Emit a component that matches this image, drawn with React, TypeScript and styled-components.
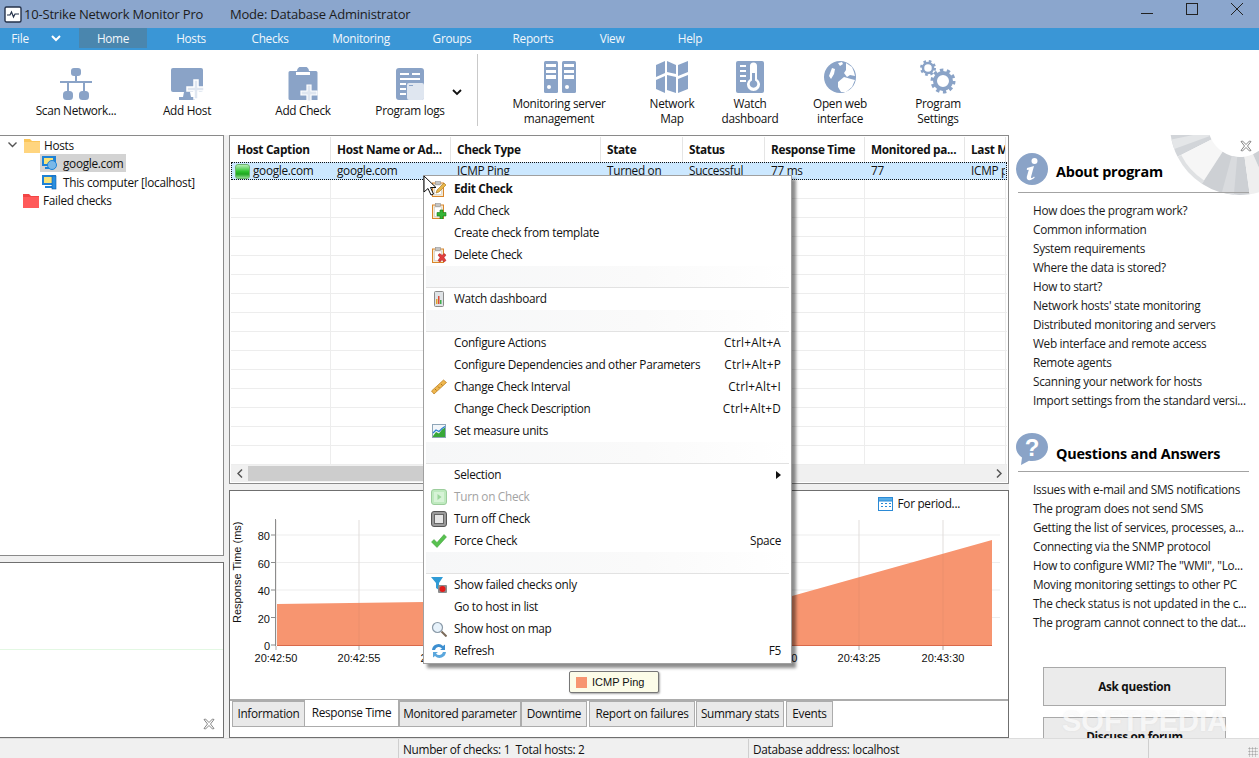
import React from 'react';
import styled, { createGlobalStyle } from 'styled-components';

const GlobalStyle = createGlobalStyle`
  html, body {
    margin: 0;
    padding: 0;
    background: #f0f0f0;
  }
  * {
    box-sizing: border-box;
  }
  body {
    font-family: "Open Sans", "Noto Sans", sans-serif;
    font-size: 11.8px;
    letter-spacing: -0.3px;
    color: #111;
  }
`;

const Win = styled.div`
  position: relative;
  width: 1259px;
  height: 758px;
  overflow: hidden;
  display: flex;
  flex-direction: column;
  background: #f0f0f0;
`;

/* title + ribbon */
const TitleBar = styled.div`
  height: 28px;
  flex: none;
  display: flex;
  align-items: center;
  background: #8ba6cd;
  padding-left: 4px;
  font-size: 13px;
  letter-spacing: -0.2px;
  color: #1c1c1c;
`;

const TitleText = styled.span<{ $w: number }>`
  width: ${(p) => p.$w}px;
  white-space: nowrap;
`;

const WinBtns = styled.div`
  margin-left: auto;
  display: flex;
  align-items: center;
  height: 100%;
`;

const WinBtn = styled.div`
  width: 45px;
  height: 100%;
  display: flex;
  justify-content: center;
`;

const MenuBar = styled.div`
  height: 22px;
  flex: none;
  display: flex;
  background: #3a96d6;
  color: #f2f7fb;
`;

const MenuTab = styled.div<{ $w: number; $active?: boolean }>`
  width: ${(p) => p.$w}px;
  height: 20px;
  display: flex;
  align-items: center;
  justify-content: center;
  background: ${(p) => (p.$active ? '#4a86ae' : 'transparent')};
`;

const Toolbar = styled.div`
  height: 80px;
  flex: none;
  display: flex;
  background: #fff;
  padding-left: 20px;
  position: relative;
`;

const Gripper = styled.div`
  position: absolute;
  left: 3px;
  top: 4px;
  width: 5px;
  height: 74px;
  background-image: radial-gradient(#aaa 45%, transparent 50%);
  background-size: 2px 2px;
`;

const Tool = styled.div<{ $w: number; $ml?: number; $low?: boolean }>`
  width: ${(p) => p.$w}px;
  margin-left: ${(p) => p.$ml ?? 0}px;
  padding-top: ${(p) => (p.$low ? 17 : 10)}px;
  display: flex;
  flex-direction: column;
  align-items: center;
  text-align: center;
  line-height: 15px;
  color: #111;
  white-space: nowrap;
`;

const ToolLabel = styled.div`
  margin-top: 2px;
`;

const ToolChevron = styled.div`
  width: 16px;
  margin-left: 3px;
  padding-top: 39px;
  display: flex;
  justify-content: center;
`;

const ToolDivider = styled.div`
  width: 1px;
  height: 72px;
  margin: 4px 0 0 12px;
  background: #c9c9c9;
`;

/* main area */
const Main = styled.div`
  flex: 1;
  min-height: 0;
  display: flex;
  background: #fff;
  padding-top: 5px;
`;

const LeftCol = styled.div`
  width: 224px;
  flex: none;
  display: flex;
  flex-direction: column;
  background: #f0f0f0;
`;

const TreePanel = styled.div`
  height: 421px;
  flex: none;
  background: #fff;
  border: 1px solid #8a8a8a;
  border-left: 0;
`;

const HSplit = styled.div`
  height: 6px;
  flex: none;
  display: flex;
  justify-content: center;
  align-items: center;
`;

const HDots = styled.div`
  width: 74px;
  height: 3px;
  background-image: radial-gradient(#999 45%, transparent 50%);
  background-size: 2px 2px;
`;

const NotePanel = styled.div`
  flex: 1;
  position: relative;
  background: #fff;
  border: 1px solid #6f6f6f;
  border-left: 0;
`;

const NoteLine = styled.div`
  margin-top: 86px;
  height: 1px;
  background: #e3f8e3;
`;

const CloseMark = styled.div<{ $r: number; $b?: number; $t?: number }>`
  position: absolute;
  right: ${(p) => p.$r}px;
  ${(p) => (p.$t !== undefined ? `top: ${p.$t}px;` : `bottom: ${p.$b}px;`)}
  width: 12px;
  height: 12px;
  display: flex;
`;

const TreeRow = styled.div<{ $indent: number }>`
  height: 18.34px;
  display: flex;
  align-items: center;
  padding-left: ${(p) => p.$indent}px;
  white-space: nowrap;
`;

const Twist = styled.div`
  width: 16px;
  margin-left: 4px;
  margin-right: 3px;
  display: flex;
  justify-content: center;
`;

const Node = styled.div<{ $selected?: boolean; $gap: number }>`
  height: 18px;
  display: flex;
  align-items: center;
  gap: ${(p) => p.$gap}px;
  padding: 0 3px 0 1px;
  background: ${(p) => (p.$selected ? '#d3d3d3' : 'transparent')};
`;

const VSplit = styled.div`
  width: 5px;
  flex: none;
  display: flex;
  align-items: center;
  background: #f0f0f0;
  padding-bottom: 6px;
`;

const VDots = styled.div`
  width: 3px;
  height: 82px;
  margin-left: 1px;
  background-image: radial-gradient(#999 45%, transparent 50%);
  background-size: 2px 2px;
`;

const MidCol = styled.div`
  width: 780px;
  flex: none;
  display: flex;
  flex-direction: column;
  gap: 6px;
  background: #f0f0f0;
`;

const GridPanel = styled.div`
  height: 349px;
  flex: none;
  display: flex;
  flex-direction: column;
  background: #fff;
  border: 1px solid #8a8a8a;
  padding: 1px;
  overflow: hidden;
`;

const GridHead = styled.div`
  height: 25px;
  flex: none;
  display: flex;
  font-weight: 700;
`;

const HeadCell = styled.div<{ $w: number }>`
  width: ${(p) => p.$w}px;
  flex: none;
  display: flex;
  align-items: center;
  padding: 0 0 2px 6px;
  border-right: 1px solid #e5e5e5;
  white-space: nowrap;
  overflow: hidden;
`;

const GridBody = styled.div`
  flex: 1;
  min-height: 0;
  overflow: hidden;
`;

const GridRow = styled.div<{ $selected?: boolean }>`
  height: ${(p) => (p.$selected ? 18 : 19)}px;
  display: flex;
  background: ${(p) => (p.$selected ? '#cce8ff' : '#fff')};
  ${(p) =>
    p.$selected
      ? 'outline: 1px dotted #111; outline-offset: -1px;'
      : 'border-bottom: 1px solid #ededed;'}
`;

const Cell = styled.div<{ $w: number; $blank?: boolean }>`
  width: ${(p) => p.$w}px;
  flex: none;
  display: flex;
  align-items: center;
  gap: 3px;
  padding: 0 0 ${(p) => (p.$blank ? 0 : 2)}px ${(p) => (p.$blank ? 0 : 6)}px;
  border-right: 1px solid ${(p) => (p.$blank ? '#ededed' : 'transparent')};
  white-space: nowrap;
  overflow: hidden;
`;

const FirstCell = styled(Cell)`
  padding-left: 4px;
`;

const LedBox = styled.span`
  width: 15px;
  height: 15px;
  flex: none;
  margin-bottom: -2px;
  border-radius: 3px;
  border: 1px solid #6fb56f;
  background: linear-gradient(#b5edb5, #2fc22f 50%, #1fa51f 70%, #8fdc8f);
`;

const ScrollBar = styled.div`
  height: 17px;
  flex: none;
  display: flex;
  align-items: center;
  background: #f0f0f0;
`;

const ScrollEnd = styled.div`
  width: 17px;
  height: 17px;
  flex: none;
  display: flex;
  align-items: center;
  justify-content: center;
`;

const ScrollThumb = styled.div`
  height: 15px;
  flex: 1;
  margin-right: 220px;
  background: #cdcdcd;
`;

const ChartPanel = styled.div`
  flex: 1;
  min-height: 0;
  display: flex;
  flex-direction: column;
  position: relative;
  background: #fff;
  border: 1px solid #6f6f6f;
`;

const PeriodBar = styled.div`
  height: 24px;
  flex: none;
  display: flex;
  align-items: center;
  justify-content: flex-end;
  gap: 5px;
  padding-right: 48px;
`;

const ChartSvg = styled.svg`
  display: block;
  flex: none;
  text {
    font-family: "Liberation Sans", Arial, sans-serif;
    font-size: 11px;
    letter-spacing: 0;
    fill: #111;
  }
`;

const Legend = styled.div`
  position: absolute;
  left: 339px;
  top: 180px;
  width: 90px;
  height: 22px;
  display: flex;
  align-items: center;
  gap: 5px;
  padding-left: 6px;
  background: #fcfce8;
  border: 1px solid #777;
  border-radius: 2px;
  box-shadow: 1px 1px 2px rgba(0, 0, 0, 0.35);
  font-family: "Liberation Sans", Arial, sans-serif;
  font-size: 11px;
  letter-spacing: 0;
`;

const LegendSwatch = styled.span`
  width: 11px;
  height: 11px;
  background: #f79570;
`;

const Tabs = styled.div`
  height: 38px;
  flex: none;
  display: flex;
  align-items: flex-start;
  padding-left: 2px;
  border-top: 2px solid #acacac;
`;

const Tab = styled.div<{ $w: number; $active?: boolean; $ml?: number }>`
  width: ${(p) => p.$w}px;
  margin-left: ${(p) => p.$ml ?? 0}px;
  height: ${(p) => (p.$active ? 27 : 26)}px;
  margin-top: ${(p) => (p.$active ? -1 : 0)}px;
  padding-bottom: 3px;
  display: flex;
  align-items: center;
  justify-content: center;
  white-space: nowrap;
  background: ${(p) => (p.$active ? '#fff' : '#e9e9e9')};
  border: 1px solid #acacac;
  border-top: ${(p) => (p.$active ? '0' : '1px solid #acacac')};
  border-left: ${(p) => (p.$active ? '0' : '1px solid #acacac')};
  border-right: 1px solid #acacac;
`;

/* right help column */
const HelpCol = styled.div`
  flex: 1;
  position: relative;
  overflow: hidden;
  background: #fff;
  padding: 20px 10px 0 9px;
`;

const Buoy = styled.svg`
  position: absolute;
  right: 0;
  top: 0;
`;

const HelpHead = styled.div`
  position: relative;
  height: 38px;
  display: flex;
  align-items: center;
  gap: 8px;
  border-bottom: 1px solid #a3a3a3;
  padding-bottom: 5px;
`;

const HelpIconBox = styled.div<{ $drop: number }>`
  margin-left: -2px;
  width: 32px;
  height: 32px;
  margin-top: ${(p) => p.$drop}px;
  flex: none;
`;

const HelpTitle = styled.div<{ $drop: number }>`
  font-size: 14.4px;
  font-weight: 700;
  letter-spacing: -0.2px;
  color: #000;
  padding-top: ${(p) => p.$drop}px;
`;

const HelpList = styled.div<{ $mb: number }>`
  padding: 8px 0 0 15px;
  margin-bottom: ${(p) => p.$mb}px;
  line-height: 19px;
`;

const HelpLink = styled.div`
  white-space: nowrap;
  height: 19px;
  color: #1a1a1a;
`;

const HelpButton = styled.div`
  width: 183px;
  height: 39px;
  margin: 0 0 11px 25px;
  padding-bottom: 2px;
  flex: none;
  display: flex;
  align-items: center;
  justify-content: center;
  font-weight: 700;
  background: #ebebeb;
  border: 1px solid #a9a9a9;
`;

const Watermark = styled.div`
  position: absolute;
  left: 53px;
  bottom: 0;
  font-family: "Liberation Sans", Arial, sans-serif;
  font-weight: 700;
  font-size: 29px;
  letter-spacing: 0;
  color: rgba(255, 255, 255, 0.72);
  text-shadow: 0 0 2px rgba(190, 190, 190, 0.25);
`;

/* status */
const StatusBar = styled.div`
  height: 20px;
  flex: none;
  display: flex;
  align-items: center;
  background: #f0f0f0;
  border-top: 1px solid #dcdcdc;
`;

const StatusCell = styled.div<{ $w: number }>`
  width: ${(p) => p.$w}px;
  height: 100%;
  display: flex;
  align-items: center;
  padding-left: 4px;
  border-right: 1px solid #cfcfcf;
  white-space: nowrap;
  flex: none;
`;

const Grip = styled.div`
  position: absolute;
  right: 1px;
  bottom: 1px;
  width: 10px;
  height: 10px;
  background-image: radial-gradient(#aaa 45%, transparent 50%);
  background-size: 3px 3px;
`;

/* context menu */
const Menu = styled.div`
  position: absolute;
  left: 423px;
  top: 175px;
  width: 369px;
  height: 489px;
  padding: 2px 0 0 1px;
  background: #fff;
  border: 1px solid #a0a0a0;
  box-shadow: 4px 4px 3px rgba(0, 0, 0, 0.45);
`;

const MenuRow = styled.div<{ $disabled?: boolean; $bold?: boolean }>`
  height: 22px;
  display: flex;
  align-items: center;
  padding: 0 10px 2px 6px;
  white-space: nowrap;
  color: ${(p) => (p.$disabled ? '#a3a3a3' : '#111')};
  font-weight: ${(p) => (p.$bold ? 700 : 400)};
`;

const MenuIcon = styled.span`
  width: 16px;
  height: 16px;
  flex: none;
  margin-right: 7px;
  margin-bottom: -2px;
  display: flex;
`;

const MenuShort = styled.span<{ $spaced?: boolean }>`
  margin-left: auto;
  letter-spacing: ${(p) => (p.$spaced ? '0.2px' : '-0.3px')};
`;

const MenuSep = styled.div`
  height: 22px;
  margin: 0 2px 0 1px;
  background: linear-gradient(90deg, #f6f7f8, #fafafa 60%, #ffffff);
  border-bottom: 1px solid #e2e2e2;
`;

const Cursor = styled.svg`
  position: absolute;
  left: 423px;
  top: 175px;
`;

const iconBlue = '#8aa3c7';

const ScanIcon = () => (
  <svg width="34" height="34" viewBox="0 0 34 34">
    <rect x="12" y="1" width="10" height="8" rx="3" fill={iconBlue} />
    <rect x="16" y="8" width="2" height="8" fill={iconBlue} />
    <rect x="1" y="14" width="32" height="2" fill={iconBlue} />
    <rect x="8" y="15" width="2" height="9" fill={iconBlue} />
    <rect x="24" y="15" width="2" height="9" fill={iconBlue} />
    <rect x="4" y="24" width="10" height="9" rx="3.5" fill={iconBlue} />
    <rect x="20" y="24" width="10" height="9" rx="3.5" fill={iconBlue} />
  </svg>
);

const AddHostIcon = () => (
  <svg width="34" height="34" viewBox="0 0 34 34">
    <rect x="1" y="1" width="32" height="24" rx="2" fill={iconBlue} />
    <path d="M14 25h6l1 5h4v3H9v-3h4z" fill={iconBlue} />
    <path d="M24 13h4v7h6v4h-6v8h-4v-8h-7v-4h7z" fill="#dfe6f0" stroke="#fff" strokeWidth="1.5" />
  </svg>
);

const AddCheckIcon = () => (
  <svg width="32" height="34" viewBox="0 0 32 34">
    <path d="M3 4h7a6 5 0 0 1 12 0h7a1.500 1.500 0 0 1 1.500 1.500V33H3a1.500 1.500 0 0 1-1.500-1.500v-26A1.500 1.500 0 0 1 3 4z" fill={iconBlue} />
    <rect x="9" y="5" width="14" height="3" fill="#fff" />
    <path d="M20 18h4v6h6v4h-6v6h-4v-6h-6v-4h6z" fill="#dfe6f0" stroke="#fff" strokeWidth="1.2" />
  </svg>
);

const LogsIcon = () => (
  <svg width="30" height="34" viewBox="0 0 30 34">
    <rect x="1" y="1" width="28" height="32" rx="3" fill={iconBlue} />
    <rect x="5" y="6" width="9" height="2" fill="#fff" />
    <rect x="17" y="6" width="8" height="2" fill="#fff" />
    <rect x="5" y="11" width="20" height="2" fill="#fff" />
    <rect x="5" y="16" width="6" height="2" fill="#fff" />
    <rect x="5" y="21" width="6" height="2" fill="#fff" />
    <rect x="5" y="26" width="6" height="2" fill="#fff" />
    <rect x="12" y="16" width="17" height="17" rx="2" fill="#dfe6f0" />
    <rect x="14" y="18" width="4" height="1" fill={iconBlue} />
  </svg>
);

const ServerIcon = () => (
  <svg width="34" height="34" viewBox="0 0 34 34">
    {[2, 20].map((x) => (
      <g key={x}>
        <rect x={x} y="1" width="14" height="32" rx="1.500" fill={iconBlue} />
        <rect x={x + 2} y="4" width="10" height="3" fill="#fff" />
        <rect x={x + 2} y="10" width="10" height="3" fill="#fff" />
        <rect x={x + 2} y="15" width="10" height="4" fill="#fff" />
        <circle cx={x + 5} cy="27" r="2" fill="#fff" />
      </g>
    ))}
  </svg>
);

const MapIcon = () => (
  <svg width="34" height="34" viewBox="0 0 34 34">
    <path d="M1 5l9-4v12l-9 4zM1 20l9-4v17l-9-4zM12 1l9 4v9l-9-2zM12 15l9 2v16l-9-3zM23 5l10-4v11l-10 4zM23 19l10-4v14l-10 4z" fill={iconBlue} />
  </svg>
);

const WatchIcon = () => (
  <svg width="30" height="34" viewBox="0 0 30 34">
    <rect x="1" y="1" width="28" height="32" rx="2" fill={iconBlue} />
    <rect x="5" y="5" width="6" height="2" fill="#fff" />
    <rect x="5" y="10" width="6" height="2" fill="#fff" />
    <rect x="5" y="15" width="6" height="2" fill="#fff" />
    <rect x="5" y="20" width="6" height="2" fill="#fff" />
    <path d="M15 6a3.500 3.500 0 0 1 7 0v13a6.500 6.500 0 1 1-7 0z" fill="#fff" />
    <path d="M17 13h3v7.500a3.800 3.800 0 1 1-3 0z" fill={iconBlue} />
  </svg>
);

const GlobeIcon = () => (
  <svg width="34" height="34" viewBox="0 0 34 34">
    <circle cx="17" cy="17" r="16" fill={iconBlue} />
    <path d="M15 3l4-1 1 2-3 2zM23 3l6 4 2 5 1 4-5-1-3 2-3-4 2-3zM9 8l3 1-1 5-3 5-2-3zM15 22l6-5 7 2 4 1-3 7-6 5-5 0-3-5z" fill="#fff" />
  </svg>
);

const GearsIcon = () => (
  <svg width="36" height="34" viewBox="0 0 36 34">
    <circle cx="8" cy="8" r="5" fill="none" stroke={iconBlue} strokeWidth="2.500" />
    <circle cx="8" cy="8" r="6.500" fill="none" stroke={iconBlue} strokeWidth="3" strokeDasharray="2.500 2.600" />
    <circle cx="23" cy="21" r="8" fill="none" stroke={iconBlue} strokeWidth="4" />
    <circle cx="23" cy="21" r="10.500" fill="none" stroke={iconBlue} strokeWidth="4" strokeDasharray="3.300 3.300" />
  </svg>
);

const FolderIcon = ({ c, tab }: { c: string; tab: string }) => (
  <svg width="16" height="15" viewBox="0 0 16 15">
    <path d="M0 1h6l2 2h8v12H0z" fill={tab} />
    <rect x="0" y="4" width="16" height="11" fill={c} />
  </svg>
);

const HostIcon = ({ globe }: { globe?: boolean }) => (
  <svg width="16" height="16" viewBox="0 0 16 16">
    <rect x="1" y="1" width="14" height="10" fill="#1e82d6" />
    <rect x="3" y="3" width="9" height="6" fill="#f7e27a" />
    <rect x="4" y="12" width="8" height="2" fill="#1e82d6" />
    {globe ? <circle cx="11" cy="10" r="4.500" fill="#7ab8e8" stroke="#1e82d6" /> : <rect x="11" y="2" width="4" height="13" fill="#2a8fe0" stroke="#0f5fa8" strokeWidth="0.600" />}
  </svg>
);

const XIcon = () => (
  <svg width="12" height="12" viewBox="0 0 12 12">
    <path d="M1 1.500L2.500 1 6 4.500 9.500 1 11 1.500 7.500 6 11 10.500 9.500 11 6 7.500 2.500 11 1 10.500 4.500 6z" fill="#fff" stroke="#777" strokeWidth="0.900" />
  </svg>
);

const Clipboard = ({ children }: { children?: React.ReactNode }) => (
  <svg width="16" height="16" viewBox="0 0 16 16">
    <rect x="1.500" y="2" width="11" height="13.500" fill="#f4e9d2" stroke="#d9862a" />
    <rect x="3.500" y="4" width="7" height="9.500" fill="#fff" stroke="#bbb" strokeWidth="0.500" />
    <rect x="4.500" y="0.500" width="5" height="3" fill="#c4c4c4" stroke="#888" strokeWidth="0.500" />
    {children}
  </svg>
);

const iconEdit = (
  <Clipboard>
    <path d="M5 12l1-3 7-7 2 2-7 7z" fill="#e8b64a" stroke="#a8751a" strokeWidth="0.600" />
  </Clipboard>
);
const iconAdd = (
  <Clipboard>
    <path d="M9 7h3v2.500h3V13h-3v3H9v-3H6V9.500h3z" fill="#36b436" stroke="#167a16" strokeWidth="0.600" />
  </Clipboard>
);
const iconDelete = (
  <Clipboard>
    <path d="M7 8l2-1.500 2 2 2-2L15 8l-2 2.500 2 3-2 1.500-2-2.500L9 15l-2-1.500 2-3z" fill="#e23d3d" stroke="#a51a1a" strokeWidth="0.500" />
  </Clipboard>
);
const iconDash = (
  <svg width="16" height="16" viewBox="0 0 16 16">
    <rect x="3.500" y="0.500" width="9" height="15" rx="1" fill="#dfe3e6" stroke="#8b8b8b" />
    <rect x="5" y="8" width="1.500" height="5" fill="#e2a52c" />
    <rect x="7" y="5" width="1.500" height="8" fill="#d94c3a" />
    <rect x="9" y="9" width="1.500" height="4" fill="#3fae4b" />
  </svg>
);
const iconRuler = (
  <svg width="16" height="16" viewBox="0 0 16 16">
    <path d="M0.500 12L12.500 1l3 2.500L3 15z" fill="#eeb64e" stroke="#b97a18" strokeWidth="0.700" />
    <path d="M4 10l1.500 1.500M7 7.500l1.500 1.500M10 5l1.500 1.500" stroke="#8a5a10" strokeWidth="0.700" />
  </svg>
);
const iconUnits = (
  <svg width="16" height="16" viewBox="0 0 16 16">
    <rect x="1.500" y="1.500" width="13" height="13" fill="#f2f6fa" stroke="#8fa6b8" />
    <path d="M2 13l3-4 3 1.500 3-4 3-2V14H2z" fill="#38a838" />
    <path d="M2 10l3-3 3 1.500 3-3 3-2" fill="none" stroke="#2a7fd0" strokeWidth="1.200" />
  </svg>
);
const iconPlay = (
  <svg width="16" height="16" viewBox="0 0 16 16">
    <rect x="0.500" y="0.500" width="15" height="15" rx="2.500" fill="#bfeabf" stroke="#9ccd9c" />
    <rect x="3" y="3" width="10" height="10" fill="#d7f3d7" />
    <path d="M6.500 5l4 3-4 3z" fill="#9bd69b" />
  </svg>
);
const iconStop = (
  <svg width="16" height="16" viewBox="0 0 16 16">
    <rect x="0.500" y="0.500" width="15" height="15" rx="2.500" fill="#9a9a9a" stroke="#555" />
    <rect x="3.500" y="3.500" width="9" height="9" fill="#e6e6e6" stroke="#666" />
  </svg>
);
const iconCheck = (
  <svg width="16" height="16" viewBox="0 0 16 16">
    <path d="M0.500 9l2.500-2.500 3 3L13 1.500 15.500 4 6 14.500z" fill="#57c14f" stroke="#3a9a35" strokeWidth="0.500" />
  </svg>
);
const iconFilter = (
  <svg width="16" height="16" viewBox="0 0 16 16">
    <path d="M0 0h12L8 6v7L5 11V6z" fill="#2f9bd6" />
    <rect x="7" y="8" width="9" height="8" rx="1" fill="#8c8c8c" />
    <circle cx="11.500" cy="12" r="3" fill="#e31b1b" />
  </svg>
);
const iconSearch = (
  <svg width="16" height="16" viewBox="0 0 16 16">
    <circle cx="6.500" cy="6.500" r="5" fill="#e7f2fb" stroke="#8a9aa8" strokeWidth="1.200" />
    <path d="M10.500 10.500L15.500 15.500" stroke="#7a6a5a" strokeWidth="2" />
  </svg>
);
const iconRefresh = (
  <svg width="16" height="16" viewBox="0 0 16 16">
    <path d="M1 7a6.500 6.500 0 0 1 11-4l2-1.500V7H9l2-1.500A4 4 0 0 0 4 7z" fill="#3d8fd0" />
    <path d="M15 9a6.500 6.500 0 0 1-11 4l-2 1.500V9h5l-2 1.500A4 4 0 0 0 12 9z" fill="#5ba7dd" />
  </svg>
);

type MenuEntry = { label: string; icon?: React.ReactNode; short?: string; bold?: boolean; disabled?: boolean; sub?: boolean } | 'sep';

const menuEntries: MenuEntry[] = [
  { label: 'Edit Check', icon: iconEdit, bold: true },
  { label: 'Add Check', icon: iconAdd },
  { label: 'Create check from template' },
  { label: 'Delete Check', icon: iconDelete },
  'sep',
  { label: 'Watch dashboard', icon: iconDash },
  'sep',
  { label: 'Configure Actions', short: 'Ctrl+Alt+A' },
  { label: 'Configure Dependencies and other Parameters', short: 'Ctrl+Alt+P' },
  { label: 'Change Check Interval', icon: iconRuler, short: 'Ctrl+Alt+I' },
  { label: 'Change Check Description', short: 'Ctrl+Alt+D' },
  { label: 'Set measure units', icon: iconUnits },
  'sep',
  { label: 'Selection', sub: true },
  { label: 'Turn on Check', icon: iconPlay, disabled: true },
  { label: 'Turn off Check', icon: iconStop },
  { label: 'Force Check', icon: iconCheck, short: 'Space' },
  'sep',
  { label: 'Show failed checks only', icon: iconFilter },
  { label: 'Go to host in list' },
  { label: 'Show host on map', icon: iconSearch },
  { label: 'Refresh', icon: iconRefresh, short: 'F5' },
];

const columns = [
  { name: 'Host Caption', w: 100, val: 'google.com' },
  { name: 'Host Name or Ad...', w: 120, val: 'google.com' },
  { name: 'Check Type', w: 150, val: 'ICMP Ping' },
  { name: 'State', w: 82, val: 'Turned on' },
  { name: 'Status', w: 82, val: 'Successful' },
  { name: 'Response Time', w: 100, val: '77 ms' },
  { name: 'Monitored pa...', w: 100, val: '77' },
  { name: 'Last M', w: 41, val: 'ICMP p' },
];

const aboutLinks = [
  'How does the program work?',
  'Common information',
  'System requirements',
  'Where the data is stored?',
  'How to start?',
  "Network hosts' state monitoring",
  'Distributed monitoring and servers',
  'Web interface and remote access',
  'Remote agents',
  'Scanning your network for hosts',
  'Import settings from the standard versi...',
];

const faqLinks = [
  'Issues with e-mail and SMS notifications',
  'The program does not send SMS',
  'Getting the list of services, processes, a...',
  'Connecting via the SNMP protocol',
  'How to configure WMI? The "WMI", "Lo...',
  'Moving monitoring settings to other PC',
  'The check status is not updated in the c...',
  'The program cannot connect to the dat...',
];

const menuTabs = [
  { t: 'Hosts', w: 88 },
  { t: 'Checks', w: 70 },
  { t: 'Monitoring', w: 112 },
  { t: 'Groups', w: 70 },
  { t: 'Reports', w: 92 },
  { t: 'View', w: 66 },
  { t: 'Help', w: 90 },
];

const tabs = [
  { t: 'Information', w: 73 },
  { t: 'Response Time', w: 94, active: true },
  { t: 'Monitored parameter', w: 122 },
  { t: 'Downtime', w: 66, ml: 0 },
  { t: 'Report on failures', w: 106, ml: 2 },
  { t: 'Summary stats', w: 88, ml: 1 },
  { t: 'Events', w: 47, ml: 2 },
];

const xTicks = [
  [276, '20:42:50'],
  [359, '20:42:55'],
  [442, '20:43:00'],
  [526, '20:43:05'],
  [609, '20:43:10'],
  [692, '20:43:15'],
  [776, '20:43:20'],
  [859, '20:43:25'],
  [943, '20:43:30'],
] as const;

const yTicks = [0, 20, 40, 60, 80];
const yOf = (v: number) => 645 - v * 1.375;

const ResponseChart = () => (
  <ChartSvg width="778" height="184" viewBox="230 515 778 184">
    {yTicks.slice(1).map((v) => (
      <line key={v} x1="276" x2="1000" y1={yOf(v)} y2={yOf(v)} stroke="#ededed" />
    ))}
    {xTicks.map(([x]) => (
      <line key={x} x1={x} x2={x} y1="520" y2="645" stroke="#ededed" />
    ))}
    <path d="M277 604 L424 602 L792 596 L992 540 L992 645 L277 645 Z" fill="#f79570" />
    <line x1="277" x2="992" y1="645.500" y2="645.500" stroke="#d9694a" />
    {xTicks.map(([x]) => (
      <line key={x} x1={x} x2={x} y1="520" y2="645" stroke="#8a6a5a" strokeOpacity="0.1" />
    ))}
    <line x1="275.500" x2="275.500" y1="519" y2="646" stroke="#8c8c8c" />
    {yTicks.map((v) => (
      <g key={v}>
        <line x1="271" x2="275" y1={yOf(v)} y2={yOf(v)} stroke="#8c8c8c" />
        <text x="270" y={yOf(v) + 5} textAnchor="end">{v}</text>
      </g>
    ))}
    {xTicks.map(([x, l]) => (
      <g key={x}>
        <line x1={x} x2={x} y1="646" y2="650" stroke="#a8a8a8" />
        <text x={x} y="662" textAnchor="middle">{l}</text>
      </g>
    ))}
    <text transform="translate(241 623) rotate(-90)">Response Time (ms)</text>
  </ChartSvg>
);

// annular sector of the lifebuoy, angles in degrees clockwise from +x
const sector = (a1: number, a2: number, r1: number, r2: number) => {
  const cx = 75;
  const cy = -10;
  const pt = (a: number, r: number) => {
    const t = (a * Math.PI) / 180;
    return `${(cx + r * Math.cos(t)).toFixed(1)} ${(cy + r * Math.sin(t)).toFixed(1)}`;
  };
  return `M${pt(a1, r2)} A${r2} ${r2} 0 0 0 ${pt(a2, r2)} L${pt(a2, r1)} A${r1} ${r1} 0 0 1 ${pt(a1, r1)} Z`;
};

const buoyParts = [
  { a: 180, b: 153, r: 32, c: '#d2d5d9' },
  { a: 168, b: 160, r: 32, c: '#e4e6e8' },
  { a: 153, b: 123, r: 32, c: '#f6f6f6' },
  { a: 153, b: 123, r: 66, c: '#dfe1e3' },
  { a: 123, b: 82, r: 32, c: '#cdd0d4' },
  { a: 105, b: 95, r: 32, c: '#d9dbde' },
  { a: 82, b: 66, r: 32, c: '#efefef' },
  { a: 66, b: 20, r: 32, c: '#cdd0d4' },
];

export default function App() {
  return (
    <Win>
      <GlobalStyle />
      <TitleBar>
        <svg width="18" height="18" viewBox="0 0 18 18" style={{ marginRight: 2 }}>
          <rect x="1" y="2" width="16" height="15" rx="1.500" fill="#fff" stroke="#25324a" strokeWidth="1.400" />
          <path d="M3 10h3l1.500-3 2 5 1.500-3h4" fill="none" stroke="#25324a" strokeWidth="1.200" />
        </svg>
        <TitleText $w={206}>10-Strike Network Monitor Pro</TitleText>
        <TitleText $w={200}>Mode: Database Administrator</TitleText>
        <WinBtns>
          <WinBtn>
            <svg width="14" height="28" viewBox="0 0 14 28"><rect x="1" y="13" width="12" height="1" fill="#222" /></svg>
          </WinBtn>
          <WinBtn>
            <svg width="14" height="28" viewBox="0 0 14 28"><rect x="1.500" y="3.500" width="11" height="11" fill="none" stroke="#222" /></svg>
          </WinBtn>
          <WinBtn>
            <svg width="14" height="28" viewBox="0 0 14 28"><path d="M1 3l12 12M13 3L1 15" stroke="#222" /></svg>
          </WinBtn>
        </WinBtns>
      </TitleBar>

      <MenuBar>
        <MenuTab $w={40}>File</MenuTab>
        <MenuTab $w={32}>
          <svg width="10" height="7" viewBox="0 0 10 7"><path d="M1 1l4 4 4-4" fill="none" stroke="#fff" strokeWidth="2" /></svg>
        </MenuTab>
        <MenuTab $w={7} />
        <MenuTab $w={68} $active>Home</MenuTab>
        {menuTabs.map((m) => (
          <MenuTab key={m.t} $w={m.w}>{m.t}</MenuTab>
        ))}
      </MenuBar>

      <Toolbar>
        <Gripper />
        <Tool $w={112} $low><ScanIcon /><ToolLabel>Scan Network...</ToolLabel></Tool>
        <Tool $w={110} $low><AddHostIcon /><ToolLabel>Add Host</ToolLabel></Tool>
        <Tool $w={122} $low><AddCheckIcon /><ToolLabel>Add Check</ToolLabel></Tool>
        <Tool $w={72} $ml={10} $low><LogsIcon /><ToolLabel>Program logs</ToolLabel></Tool>
        <ToolChevron>
          <svg width="10" height="7" viewBox="0 0 10 7"><path d="M1 1l4 4 4-4" fill="none" stroke="#111" strokeWidth="1.800" /></svg>
        </ToolChevron>
        <ToolDivider />
        <Tool $w={162}><ServerIcon /><ToolLabel>Monitoring server<br />management</ToolLabel></Tool>
        <Tool $w={64}><MapIcon /><ToolLabel>Network<br />Map</ToolLabel></Tool>
        <Tool $w={92}><WatchIcon /><ToolLabel>Watch<br />dashboard</ToolLabel></Tool>
        <Tool $w={88}><GlobeIcon /><ToolLabel>Open web<br />interface</ToolLabel></Tool>
        <Tool $w={108}><GearsIcon /><ToolLabel>Program<br />Settings</ToolLabel></Tool>
      </Toolbar>

      <Main>
        <LeftCol>
          <TreePanel>
            <TreeRow $indent={0}>
              <Twist>
                <svg width="9" height="6" viewBox="0 0 9 6"><path d="M0.500 0.500l4 4 4-4" fill="none" stroke="#555" strokeWidth="1.400" /></svg>
              </Twist>
              <Node $gap={4}><FolderIcon c="#ffd57f" tab="#fbc65a" /> Hosts</Node>
            </TreeRow>
            <TreeRow $indent={40}>
              <Node $selected $gap={6}><HostIcon globe /> google.com</Node>
            </TreeRow>
            <TreeRow $indent={40}>
              <Node $gap={6}><HostIcon /> This computer [localhost]</Node>
            </TreeRow>
            <TreeRow $indent={22}>
              <Node $gap={4}><FolderIcon c="#ff5a5a" tab="#f24545" /> Failed checks</Node>
            </TreeRow>
          </TreePanel>
          <HSplit><HDots /></HSplit>
          <NotePanel>
            <NoteLine />
            <CloseMark $r={8} $b={7}><XIcon /></CloseMark>
          </NotePanel>
        </LeftCol>

        <VSplit><VDots /></VSplit>

        <MidCol>
          <GridPanel>
            <GridHead>
              {columns.map((c) => (
                <HeadCell key={c.name} $w={c.w}>{c.name}</HeadCell>
              ))}
            </GridHead>
            <GridBody>
              <GridRow $selected>
                {columns.map((c, i) =>
                  i === 0 ? (
                    <FirstCell key={c.name} $w={c.w}><LedBox />{c.val}</FirstCell>
                  ) : (
                    <Cell key={c.name} $w={c.w}>{c.val}</Cell>
                  )
                )}
              </GridRow>
              {Array.from({ length: 16 }).map((_, r) => (
                <GridRow key={r}>
                  {columns.map((c) => (
                    <Cell key={c.name} $w={c.w} $blank />
                  ))}
                </GridRow>
              ))}
            </GridBody>
            <ScrollBar>
              <ScrollEnd>
                <svg width="6" height="9" viewBox="0 0 6 9"><path d="M5 0.500l-4 4 4 4" fill="none" stroke="#555" strokeWidth="1.500" /></svg>
              </ScrollEnd>
              <ScrollThumb />
              <ScrollEnd>
                <svg width="6" height="9" viewBox="0 0 6 9"><path d="M1 0.500l4 4-4 4" fill="none" stroke="#555" strokeWidth="1.500" /></svg>
              </ScrollEnd>
            </ScrollBar>
          </GridPanel>

          <ChartPanel>
            <PeriodBar>
              <svg width="15" height="15" viewBox="0 0 15 15">
                <rect x="0.500" y="1.500" width="14" height="13" fill="#fff" stroke="#2b8ad6" />
                <rect x="0.500" y="1.500" width="14" height="3.500" fill="#59aee8" stroke="#2b8ad6" />
                <path d="M3 7.500h2M7 7.500h2M11 7.500h2M3 10.500h2M7 10.500h2M11 10.500h2" stroke="#2b8ad6" />
              </svg>
              For period...
            </PeriodBar>
            <ResponseChart />
            <Legend><LegendSwatch />ICMP Ping</Legend>
            <Tabs>
              {tabs.map((t) => (
                <Tab key={t.t} $w={t.w} $active={t.active} $ml={t.ml}>{t.t}</Tab>
              ))}
            </Tabs>
          </ChartPanel>
        </MidCol>

        <HelpCol>
          <Buoy width="94" height="62" viewBox="0 0 94 62">
            {buoyParts.map((s) => (
              <path key={`${s.a}-${s.r}`} d={sector(s.a, s.b, s.r, 70)} fill={s.c} />
            ))}
          </Buoy>
          <CloseMark $r={7} $t={5}><XIcon /></CloseMark>
          <HelpHead>
            <HelpIconBox $drop={-5}>
              <svg width="32" height="32" viewBox="0 0 32 32">
                <circle cx="16" cy="16" r="16" fill={iconBlue} />
                <circle cx="18.500" cy="8" r="3" fill="#fff" />
                <path d="M11 15l7-2-3 11c-.3 1.500 1 1.500 3-.5l.8.8c-2.500 3.200-8.800 4.500-8-.5l2-7-2 .2z" fill="#fff" />
              </svg>
            </HelpIconBox>
            <HelpTitle $drop={0}>About program</HelpTitle>
          </HelpHead>
          <HelpList $mb={24}>
            {aboutLinks.map((l) => (
              <HelpLink key={l}>{l}</HelpLink>
            ))}
          </HelpList>
          <HelpHead>
            <HelpIconBox $drop={-3}>
              <svg width="32" height="32" viewBox="0 0 32 32">
                <path d="M16 0c9 0 16 6 16 14s-7 14-16 14c-1 0-2 0-3-.2L5 32l1-7.500C2.500 22 0 18.500 0 14 0 6 7 0 16 0z" fill={iconBlue} />
                <text x="16" y="23" textAnchor="middle" fontSize="24" fontWeight="700" fill="#fff" fontFamily="Liberation Sans, sans-serif">?</text>
              </svg>
            </HelpIconBox>
            <HelpTitle $drop={6}>Questions and Answers</HelpTitle>
          </HelpHead>
          <HelpList $mb={35}>
            {faqLinks.map((l) => (
              <HelpLink key={l}>{l}</HelpLink>
            ))}
          </HelpList>
          <HelpButton>Ask question</HelpButton>
          <HelpButton>Discuss on forum</HelpButton>
          <Watermark>SOFTPEDIA</Watermark>
        </HelpCol>
      </Main>

      <StatusBar>
        <StatusCell $w={399} />
        <StatusCell $w={350}>Number of checks: 1&nbsp;&nbsp;Total hosts: 2</StatusCell>
        <StatusCell $w={400}>Database address: localhost</StatusCell>
        <Grip />
      </StatusBar>

      <Menu>
        {menuEntries.map((e, i) =>
          e === 'sep' ? (
            <MenuSep key={i} />
          ) : (
            <MenuRow key={e.label} $bold={e.bold} $disabled={e.disabled}>
              <MenuIcon>{e.icon}</MenuIcon>
              {e.label}
              {e.short && <MenuShort $spaced={e.short.includes('+')}>{e.short}</MenuShort>}
              {e.sub && (
                <MenuShort>
                  <svg width="5" height="8" viewBox="0 0 5 8"><path d="M0 0l5 4-5 4z" fill="#111" /></svg>
                </MenuShort>
              )}
            </MenuRow>
          )
        )}
      </Menu>
      <Cursor width="18" height="22" viewBox="0 0 18 22">
        <path d="M1 1v16l4-3.500 3 6.500 2.500-1-3-6.500H13z" fill="#fff" stroke="#111" strokeWidth="1" />
      </Cursor>
    </Win>
  );
}
